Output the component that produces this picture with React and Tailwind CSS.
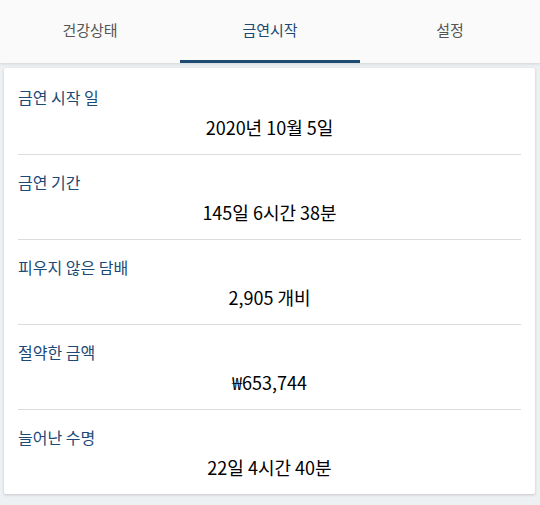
import React from "react";

const rows = [
  { label: "금연 시작 일", value: "2020년 10월 5일" },
  { label: "금연 기간", value: "145일 6시간 38분" },
  { label: "피우지 않은 담배", value: "2,905 개비" },
  { label: "절약한 금액", value: "₩653,744" },
  { label: "늘어난 수명", value: "22일 4시간 40분" },
];

const tabs = ["건강상태", "금연시작", "설정"];

export default function App() {
  return (
    <div
      className="w-[540px] h-[505px] bg-[#eef1f4] overflow-hidden"
      style={{ fontFamily: '"Noto Sans CJK KR", "Noto Sans", sans-serif' }}
    >
      <div className="relative z-10 flex h-[63px] bg-[#fafafa] shadow-[0_1px_3px_rgba(0,0,0,0.12)]">
        {tabs.map((t, i) => (
          <div
            key={t}
            className={
              "flex-1 flex items-center justify-center text-[15px] border-b-[3px] " +
              (i === 1
                ? "text-[#1d4a73] border-[#1d4a73]"
                : "text-[#555555] border-transparent")
            }
          >
            <span className="leading-none -mt-[1px]">{t}</span>
          </div>
        ))}
      </div>
      <div className="mx-[4px] mt-[5px] w-[531px] bg-white rounded-[2px] shadow-[0_1px_3px_rgba(0,0,0,0.18)] px-[14px] pt-[2px]">
        {rows.map((r, i) => (
          <div
            key={r.label}
            className={
              "flex flex-col pt-[15px] pb-[14px] " +
              (i < rows.length - 1 ? "border-b border-[#dcdcdc]" : "")
            }
          >
            <div className="h-[24px] leading-[24px] text-[16px] text-[#1b4a76]">
              {r.label}
            </div>
            <div className="mt-[5px] h-[26px] leading-[26px] text-[18px] text-black text-center">
              {r.value}
            </div>
          </div>
        ))}
      </div>
    </div>
  );
}
